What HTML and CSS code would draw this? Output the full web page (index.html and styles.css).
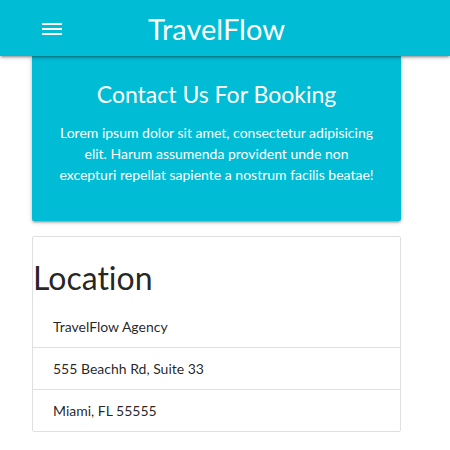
FILE: index.html
```html
<!DOCTYPE html>
<html lang="en">
<head>
<meta charset="utf-8">
<title>TravelFlow</title>
<link rel="stylesheet" href="styles.css">
</head>
<body>
<nav class="navbar">
  <div class="nav-inner">
    <span class="menu-btn" aria-label="menu">
      <svg width="20" height="12" viewBox="0 0 20 12"><rect x="0" y="0" width="20" height="2" fill="#fff"/><rect x="0" y="5" width="20" height="2" fill="#fff"/><rect x="0" y="10" width="20" height="2" fill="#fff"/></svg>
    </span>
    <span class="brand">TravelFlow</span>
    <span></span>
  </div>
</nav>
<main class="content">
  <section class="contact-card">
    <h2 class="contact-title">Contact Us For Booking</h2>
    <p class="contact-text">Lorem ipsum dolor sit amet, consectetur adipisicing elit. Harum assumenda provident unde non excepturi repellat sapiente a nostrum facilis beatae!</p>
  </section>
  <section class="location">
    <h3 class="location-title">Location</h3>
    <ul class="location-list">
      <li class="location-item">TravelFlow Agency</li>
      <li class="location-item">555 Beachh Rd, Suite 33</li>
      <li class="location-item">Miami, FL 55555</li>
    </ul>
  </section>
</main>
</body>
</html>
```
FILE: styles.css
```css
* { box-sizing: border-box; }
html, body { margin: 0; padding: 0; background: #fff; }
body {
  font-family: Lato, "Open Sans", sans-serif;
  font-variant-ligatures: none;
  color: rgba(0,0,0,0.87);
  width: 450px;
  height: 450px;
  overflow: hidden;
}
.navbar {
  position: relative;
  z-index: 2;
  height: 56px;
  background: #00bcd4;
  box-shadow: 0 2px 2px 0 rgba(0,0,0,.14), 0 3px 1px -2px rgba(0,0,0,.12), 0 1px 5px 0 rgba(0,0,0,.2);
}
.nav-inner {
  margin-left: 32px;
  width: 369px;
  height: 56px;
  display: grid;
  grid-template-columns: 1fr auto 1fr;
  align-items: center;
}
.menu-btn { display: flex; padding-left: 10px; }
.menu-btn svg { display: block; }
.brand {
  color: #fff;
  font-size: 29px;
  line-height: 56px;
  padding-top: 1px;
}
.content {
  margin-left: 32px;
  width: 369px;
}
.contact-card {
  position: relative;
  z-index: 1;
  background: #00bcd4;
  color: #fff;
  text-align: center;
  border-radius: 0 0 2px 2px;
  padding: 24px 24px 36px;
  box-shadow: 0 2px 2px 0 rgba(0,0,0,.14), 0 3px 1px -2px rgba(0,0,0,.12), 0 1px 5px 0 rgba(0,0,0,.2);
}
.contact-title {
  margin: 0;
  font-weight: 400;
  font-size: 23px;
  line-height: 28px;
}
.contact-text {
  margin: 14px 0 0;
  font-size: 14px;
  line-height: 21px;
}
.location {
  margin-top: 15px;
  border: 1px solid #e0e0e0;
  border-radius: 2px;
}
.location-title {
  margin: 20px 0 8px 0;
  font-weight: 400;
  font-size: 32px;
  line-height: 41px;
}
.location-list { list-style: none; margin: 0; padding: 0; }
.location-item {
  padding: 10px 20px;
  font-size: 14px;
  line-height: 21px;
  border-bottom: 1px solid #e0e0e0;
}
.location-item:last-child { border-bottom: none; }
```
